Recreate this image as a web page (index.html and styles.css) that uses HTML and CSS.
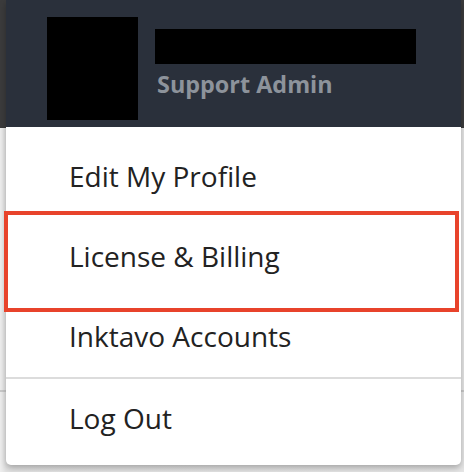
FILE: index.html
```html
<!DOCTYPE html>
<html>
<head>
<meta charset="utf-8">
<link rel="stylesheet" href="styles.css">
</head>
<body>
<div class="page">
  <div class="page-bar"></div>
  <div class="page-body"><div class="page-line"></div></div>
</div>
<div class="dropdown">
  <div class="user-head">
    <div class="avatar"></div>
    <div class="user-info">
      <div class="name-redact"></div>
      <div class="role">Support Admin</div>
    </div>
  </div>
  <ul class="menu">
    <li class="menu-item">Edit My Profile</li>
    <li class="menu-item">License &amp; Billing</li>
    <li class="menu-item">Inktavo Accounts</li>
    <li class="menu-item menu-item--sep">Log Out</li>
  </ul>
</div>
<div class="highlight"></div>
</body>
</html>
```
FILE: styles.css
```css
html, body {
  margin: 0;
  padding: 0;
}
body {
  width: 464px;
  height: 472px;
  overflow: hidden;
  position: relative;
  font-family: "Open Sans", "Noto Sans", sans-serif;
  background: #e9e9e9;
}
.page-bar {
  height: 128px;
  background: #3b3b3c;
}
.page-body {
  height: 344px;
  background: linear-gradient(90deg, #eeeeee 0, #e2e2e2 6px, #e6e6e6 100%);
  padding-top: 262px;
  box-sizing: border-box;
}
.page-line {
  height: 2px;
  background: #c9c9c9;
}
.dropdown {
  position: absolute;
  left: 6px;
  top: 0;
  width: 455px;
  border-radius: 0 0 5px 5px;
  box-shadow: 0 3px 6px rgba(0, 0, 0, 0.28);
  background: #ffffff;
}
.user-head {
  height: 127px;
  box-sizing: border-box;
  background: #2a303b;
  display: flex;
  gap: 17px;
  padding: 17px 0 0 41px;
}
.avatar {
  width: 91px;
  height: 103px;
  background: #000;
}
.user-info {
  padding-top: 12px;
}
.name-redact {
  width: 261px;
  height: 35px;
  background: #000;
}
.role {
  margin-top: 6px;
  padding-left: 2px;
  font-size: 23.4px;
  line-height: 28px;
  font-weight: 700;
  color: #8d939b;
}
.menu {
  list-style: none;
  margin: 0;
  padding: 10px 0 8px;
}
.menu-item {
  height: 80px;
  box-sizing: border-box;
  padding: 21px 0 0 63px;
  font-size: 28px;
  line-height: 36px;
  color: #222;
}
.menu-item--sep {
  border-top: 2px solid #dcdcdc;
  padding-top: 21px;
}
.highlight {
  position: absolute;
  left: 4px;
  top: 211px;
  width: 455px;
  height: 101px;
  box-sizing: border-box;
  border: 4px solid #e8432b;
}
```
